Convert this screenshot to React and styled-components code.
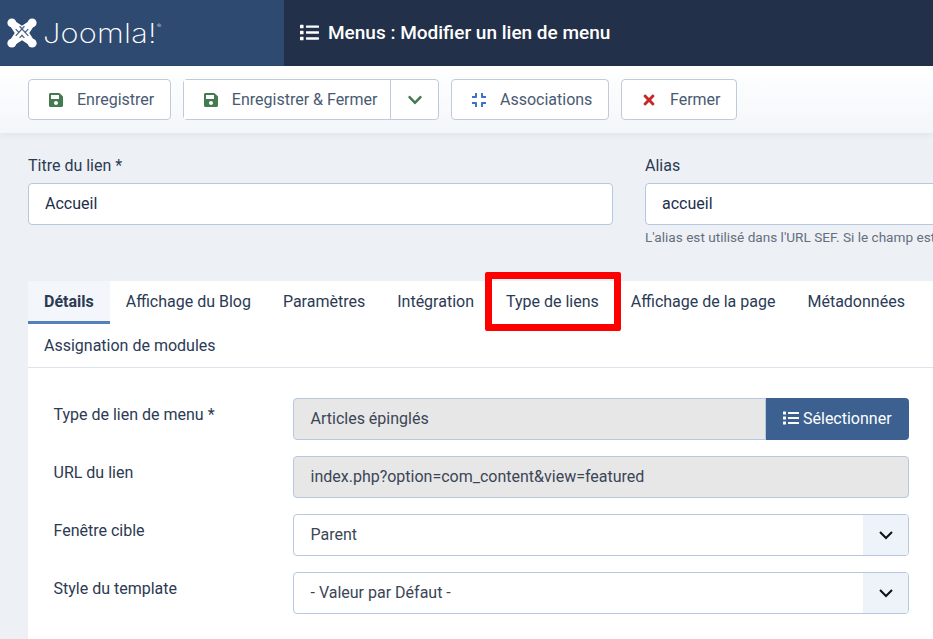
import React from 'react';
import styled, {createGlobalStyle} from 'styled-components';
import {FaSave, FaList, FaTimes, FaChevronDown, FaCompress} from 'react-icons/fa';

const GlobalStyle = createGlobalStyle`
  html, body {
    margin: 0;
    padding: 0;
    height: 100%;
    overflow: hidden;
    background: #edf1f6;
    font-family: Roboto, 'Liberation Sans', sans-serif;
    color: #22304a;
  }
  * {
    box-sizing: border-box;
  }
`;

const Page = styled.div`
  display: flex;
  flex-direction: column;
  width: 933px;
  height: 639px;
  overflow: hidden;
`;

const Header = styled.header`
  display: flex;
  flex: none;
  height: 66px;
  background: #223049;
`;

const Brand = styled.div`
  display: flex;
  align-items: center;
  gap: 6px;
  width: 284px;
  padding: 0 0 0 7px;
  background: #2f4a70;
`;

const LogoText = styled.span`
  display: inline-block;
  font-family: Inter, Lato, sans-serif;
  font-size: 27px;
  font-weight: 200;
  letter-spacing: 0.2px;
  color: #ffffff;
  line-height: 1;
  transform: scaleX(1.14);
  transform-origin: left center;
`;

const Registered = styled.sup`
  font-size: 6px;
  letter-spacing: 0;
  vertical-align: 15px;
  line-height: 0;
`;

const HeaderTitle = styled.h1`
  display: flex;
  align-items: center;
  gap: 10px;
  margin: 0;
  padding: 0 0 2px 16px;
  font-size: 19px;
  font-weight: 500;
  color: #ffffff;
  svg {
    font-size: 19px;
    margin-right: -1px;
  }
`;

const Toolbar = styled.div`
  display: flex;
  flex: none;
  gap: 12px;
  height: 67px;
  padding: 13px 28px 0;
  background: linear-gradient(#ffffff, #f3f6fa);
  box-shadow: 0 2px 6px rgba(34, 48, 73, 0.06);
`;

const Button = styled.div`
  display: flex;
  align-items: center;
  gap: 13px;
  height: 41px;
  padding: 0 15.6px 0 19px;
  background: #ffffff;
  border: 1px solid #bfcbdb;
  border-radius: 4px;
  font-size: 16px;
  color: #495a72;
  svg {
    color: ${p => p.$iconColor};
    font-size: 16px;
  }
`;

const SplitButton = styled.div`
  display: flex;
  height: 41px;
  background: #ffffff;
  border: 1px solid #bfcbdb;
  border-radius: 4px;
`;

const SplitMain = styled(Button)`
  height: 39px;
  border: 0;
  padding-right: 13px;
  border-right: 1px solid #bfcbdb;
  border-radius: 0;
`;

const SplitToggle = styled.div`
  display: flex;
  align-items: center;
  justify-content: center;
  width: 46.5px;
  color: #437a50;
  font-size: 16px;
`;

const TitleRow = styled.div`
  display: grid;
  flex: none;
  grid-template-columns: 585px 400px;
  column-gap: 32px;
  padding: 22px 0 0 28px;
`;

const Field = styled.div`
  display: flex;
  flex-direction: column;
`;

const Label = styled.label`
  font-size: 16px;
  line-height: 21px;
  margin-bottom: 7px;
  color: #2c3a52;
`;

const TextInput = styled.div`
  display: flex;
  align-items: center;
  height: 41.6px;
  padding: 0 16px 1px;
  background: #ffffff;
  border: 1px solid #b7c7df;
  border-radius: 4px;
  font-size: 16px;
  color: #22304a;
`;

const Hint = styled.div`
  margin-top: 4.9px;
  font-size: 13.6px;
  line-height: 16px;
  white-space: nowrap;
  color: #656e7d;
`;

const Card = styled.section`
  flex: 1;
  margin: 35.5px 0 0 28px;
  width: 905px;
  background: #ffffff;
`;

const Tabs = styled.nav`
  display: flex;
  flex-wrap: wrap;
  border-bottom: 1px solid #dfe4ec;
`;

const Tab = styled.div`
  position: relative;
  height: 43px;
  padding: 0 16px;
  line-height: 41px;
  font-size: 16px;
  font-weight: ${p => (p.$active ? 700 : 400)};
  color: #2b3a55;
  background: ${p => (p.$active ? '#f3f6fa' : 'transparent')};
  border-bottom: ${p => (p.$active ? '3px solid #5580bc' : '0')};
  &:last-child {
    line-height: 43px;
  }
`;

const Highlight = styled.div`
  position: absolute;
  top: -9px;
  left: -5px;
  right: -6px;
  bottom: -7px;
  border: 7px solid #fe0000;
  border-radius: 2px;
  pointer-events: none;
`;

const FormBody = styled.div`
  display: flex;
  flex-direction: column;
  gap: 16px;
  padding: 30px 24px 0 25.5px;
`;

const FormRow = styled.div`
  display: grid;
  grid-template-columns: 239.5px 1fr;
  align-items: center;
  height: 42px;
`;

const RowLabel = styled.label`
  align-self: start;
  padding-top: 7px;
  font-size: 16px;
  line-height: 20px;
  color: #2c3a52;
`;

const InputGroup = styled.div`
  display: flex;
  height: 42px;
`;

const ReadOnly = styled.div`
  display: flex;
  flex: 1;
  align-items: center;
  height: 42px;
  padding: 0 16px 1px 16.5px;
  background: #e7e7e8;
  border: 1px solid #b7c7df;
  border-radius: ${p => (p.$joined ? '4px 0 0 4px' : '4px')};
  font-size: 16px;
  color: #3b4556;
`;

const SelectButton = styled.div`
  display: flex;
  align-items: center;
  gap: 4px;
  width: 143px;
  padding: 0 0 1px 17px;
  background: #3c6090;
  border-radius: 0 4px 4px 0;
  font-size: 16px;
  color: #ffffff;
`;

const Select = styled.div`
  display: flex;
  align-items: center;
  justify-content: space-between;
  height: 42px;
  padding-left: 16.5px;
  background: #ffffff;
  border: 1px solid #b7c7df;
  border-radius: 4px;
  font-size: 16px;
  color: #3b4556;
`;

const SelectValue = styled.span`
  padding-bottom: 1px;
`;

const SelectArrow = styled.div`
  display: flex;
  align-items: center;
  justify-content: center;
  width: 45px;
  height: 40px;
  background: #eef3fa;
  border-radius: 0 3px 3px 0;
`;

const JoomlaLogo = () => (
  <svg width="30" height="30" viewBox="0 0 31 31">
    <path
      fill="#fff"
      d="M5 1 L15.5 8 L26 1 L30 5 L23 15.5 L30 26 L26 30 L15.5 23 L5 30 L1 26 L8 15.5 L1 5 Z"
    />
    <g fill="#fff">
      <circle cx="5" cy="5" r="4.6" />
      <circle cx="26" cy="5" r="4.6" />
      <circle cx="5" cy="26" r="4.6" />
      <circle cx="26" cy="26" r="4.6" />
    </g>
    <g fill="none" stroke="#2f4a70" strokeWidth="1.3" opacity="0.85">
      <path d="M9 11.5 L12.5 15 M15 17.5 L18 20.5" />
      <path d="M13 8.5 L22 18.5" />
      <path d="M22 11.5 L18.5 15 M16 17.5 L13 20.5" />
      <path d="M18 8.5 L9 18.5" />
    </g>
  </svg>
);

const Chevron = () => (
  <svg width="16" height="10" viewBox="0 0 16 10" fill="none" stroke="#111" strokeWidth="2">
    <path d="M2 2 L8 8 L14 2" />
  </svg>
);

export default () => {
  return (
    <Page>
      <GlobalStyle />
      <Header>
        <Brand>
          <JoomlaLogo />
          <LogoText>
            Joomla!<Registered>®</Registered>
          </LogoText>
        </Brand>
        <HeaderTitle>
          <FaList />
          Menus : Modifier un lien de menu
        </HeaderTitle>
      </Header>
      <Toolbar>
        <Button $iconColor="#437a50">
          <FaSave />
          Enregistrer
        </Button>
        <SplitButton>
          <SplitMain $iconColor="#437a50">
            <FaSave />
            Enregistrer &amp; Fermer
          </SplitMain>
          <SplitToggle>
            <FaChevronDown />
          </SplitToggle>
        </SplitButton>
        <Button $iconColor="#3d71c4">
          <FaCompress />
          Associations
        </Button>
        <Button $iconColor="#c52827">
          <FaTimes />
          Fermer
        </Button>
      </Toolbar>
      <TitleRow>
        <Field>
          <Label>Titre du lien *</Label>
          <TextInput>Accueil</TextInput>
        </Field>
        <Field>
          <Label>Alias</Label>
          <TextInput>accueil</TextInput>
          <Hint>L'alias est utilisé dans l'URL SEF. Si le champ est vide, Joomla</Hint>
        </Field>
      </TitleRow>
      <Card>
        <Tabs>
          <Tab $active>Détails</Tab>
          <Tab>Affichage du Blog</Tab>
          <Tab>Paramètres</Tab>
          <Tab>Intégration</Tab>
          <Tab>
            Type de liens
            <Highlight />
          </Tab>
          <Tab>Affichage de la page</Tab>
          <Tab>Métadonnées</Tab>
          <Tab>Assignation de modules</Tab>
        </Tabs>
        <FormBody>
          <FormRow>
            <RowLabel>Type de lien de menu *</RowLabel>
            <InputGroup>
              <ReadOnly $joined>Articles épinglés</ReadOnly>
              <SelectButton>
                <FaList />
                Sélectionner
              </SelectButton>
            </InputGroup>
          </FormRow>
          <FormRow>
            <RowLabel>URL du lien</RowLabel>
            <ReadOnly>index.php?option=com_content&amp;view=featured</ReadOnly>
          </FormRow>
          <FormRow>
            <RowLabel>Fenêtre cible</RowLabel>
            <Select>
              <SelectValue>Parent</SelectValue>
              <SelectArrow>
                <Chevron />
              </SelectArrow>
            </Select>
          </FormRow>
          <FormRow>
            <RowLabel>Style du template</RowLabel>
            <Select>
              <SelectValue>- Valeur par Défaut -</SelectValue>
              <SelectArrow>
                <Chevron />
              </SelectArrow>
            </Select>
          </FormRow>
        </FormBody>
      </Card>
    </Page>
  );
};
